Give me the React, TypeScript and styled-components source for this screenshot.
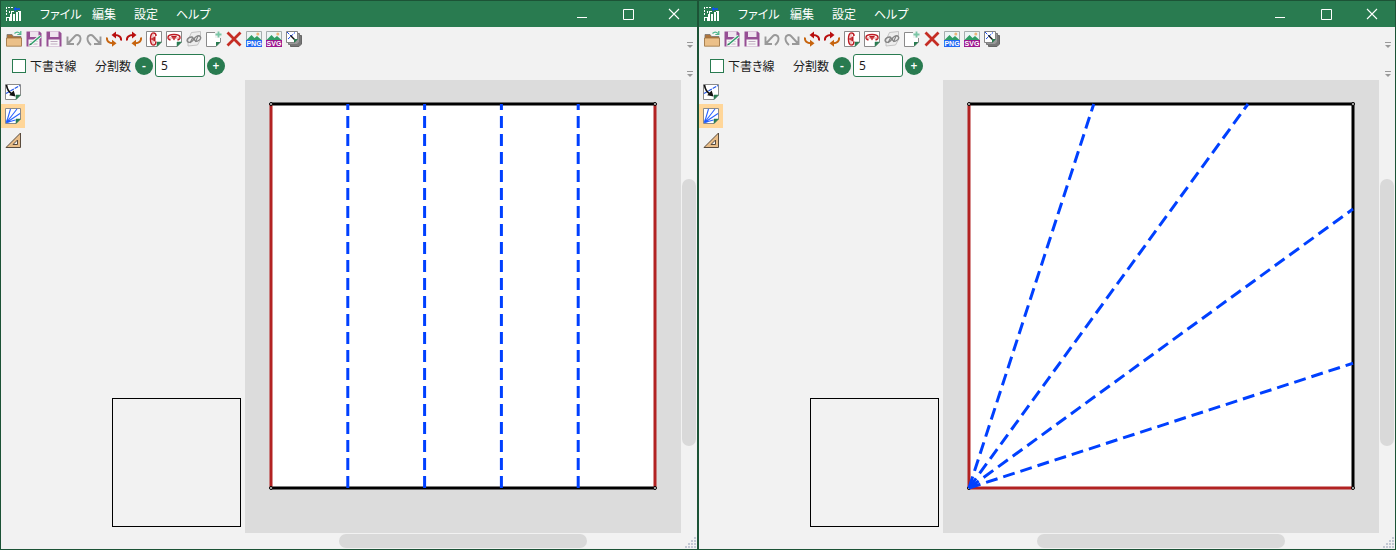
import React, { useId } from "react";
import styled, { createGlobalStyle } from "styled-components";

const Global = createGlobalStyle`
  * { box-sizing: border-box; }
  body { margin: 0; background: #f2f2f2; }
  body, button, input { font-family: "Noto Sans", "Noto Sans CJK JP", sans-serif; font-size: 12px; color: #1b1b1b; }
  button { border: 0; padding: 0; background: none; cursor: pointer; }
`;

const Desktop = styled.main`
  display: flex;
  min-height: 100vh;
`;

const Frame = styled.section`
  flex: 1;
  min-width: 0;
  display: flex;
  flex-direction: column;
  background: #f2f2f2;
  border: 1px solid #1c5336;
`;

const TitleBar = styled.header`
  display: flex;
  align-items: center;
  height: 26px;
  padding-left: 5px;
  background: #297b50;
`;

const Menu = styled.nav`
  flex: 1;
  display: grid;
  grid-template-columns: 52px 42px 42px 1fr;
  margin-left: 18px;
`;

const MenuItem = styled.button`
  color: #fff;
  text-align: left;
  line-height: 24px;
  font-family: "Noto Sans CJK JP", sans-serif;
  font-feature-settings: "palt";
`;

const CaptionButton = styled.button`
  width: 46px;
  height: 26px;
  display: grid;
  place-items: center;
`;

const Bar = styled.div<{ $height: number }>`
  display: flex;
  align-items: center;
  justify-content: space-between;
  height: ${(p) => p.$height}px;
  padding: 0 3px 0 4px;
`;

const ToolStrip = styled.div`
  display: flex;
  gap: 4px;
  padding-left: 1px;
`;

const IconButton = styled.button`
  width: 16px;
  height: 16px;
  display: block;
`;

const Overflow = styled.button`
  align-self: flex-end;
  width: 8px;
  height: 12px;
  display: block;
`;

const Options = styled.div`
  display: flex;
  align-items: center;
  padding-left: 7px;
`;

const Label = styled.label`
  line-height: 24px;
  margin-right: 4px;
  font-family: "Noto Sans CJK JP", sans-serif;
  font-feature-settings: "palt";
`;

const Check = styled.input`
  appearance: none;
  width: 14px;
  height: 14px;
  margin: 0 4px 0 0;
  background: #fff;
  border: 1px solid #297b50;
  &:checked { background: #297b50; }
`;

const CheckField = styled.div`
  display: flex;
  align-items: center;
  width: 83px;
`;

const Round = styled.button`
  width: 18px;
  height: 18px;
  border-radius: 50%;
  background: #297b50;
  color: #fff;
  font-weight: 600;
  line-height: 18px;
`;

const NumberBox = styled.input`
  width: 50px;
  height: 23px;
  margin: 0 2px;
  padding: 0 5px;
  border: 1px solid #297b50;
  border-radius: 3px;
  background: #fff;
`;

const Body = styled.div`
  flex: 1;
  display: flex;
`;

const Palette = styled.div`
  width: 24px;
`;

const PaletteButton = styled.button<{ $active: boolean }>`
  display: grid;
  place-items: center;
  width: 24px;
  height: 24px;
  background: ${(p) => (p.$active ? "#ffd699" : "transparent")};
`;

const Side = styled.aside`
  width: 220px;
  display: flex;
  align-items: flex-end;
  justify-content: flex-end;
  padding: 0 4px 22px 0;
`;

const Preview = styled.div`
  width: 129px;
  height: 129px;
  border: 1px solid #000;
`;

const Work = styled.div`
  flex: 1;
  min-width: 0;
  display: grid;
  grid-template-columns: 1fr 16px;
  grid-template-rows: 1fr 16px;
`;

const Paper = styled.div`
  background: #dcdcdc;
  padding: 20px 0 41px;
  overflow: hidden;
  display: flex;
  justify-content: center;
  align-items: flex-start;
`;

const Drawing = styled.svg`
  flex: none;
  width: 392px;
  height: 392px;
`;

const VTrack = styled.div`
  padding: 99px 1px 87px;
  display: flex;
`;

const HTrack = styled.div`
  padding: 1px 94px;
  display: flex;
`;

const Thumb = styled.div`
  flex: 1;
  border-radius: 7px;
  background: #d9d9d9;
`;

const Grip = styled.svg`
  width: 12px;
  height: 12px;
  place-self: end;
`;

const Svg = ({ children, size = 16 }: { children: React.ReactNode; size?: number }) => (
  <svg width={size} height={size} viewBox={`0 0 ${size} ${size}`} fill="none" display="block" aria-hidden="true">
    {children}
  </svg>
);

const Sheet = () => (
  <>
    <path d="M.5.5h15v10.5l-4.5 4.5H.5z" fill="#fff" stroke="#8a8a8a" />
    <path d="M11 15.5V11h4.5z" fill="#297b50" stroke="#297b50" strokeWidth=".5" />
  </>
);

const Floppy = () => (
  <>
    <path d="M.5.5h13.2l1.8 1.8v13.2H.5z" fill="#964f94" />
    <path d="M4 .5h8.5V6H4z" fill="#efe4ef" />
    <path d="M2.5 8.5h11v7h-11z" fill="#f7f7f7" />
    <path d="M4.5 10.5h7M4.5 13h7" stroke="#bfaabf" />
  </>
);

const Undo = () => (
  <path d="M1.5 5.5V13H8M2 12.5 9 5c1.8-1.8 5.2-.8 5.5 2 .2 2.5-1 5-3.5 7" stroke="#999" strokeWidth="1.9" />
);

const Rotate = () => (
  <>
    <path d="M15 9.5C15.5 6 13 4 9 4" stroke="#b90e0e" strokeWidth="2" />
    <path d="M10 .5v7L5.5 4z" fill="#b90e0e" />
    <path d="M1 6.5C.5 10 3 12.2 7 12.2" stroke="#c7640e" strokeWidth="2" />
    <path d="M6 8.8v7l4.5-3.5z" fill="#c7640e" />
  </>
);

const Picture = ({ tag, color }: { tag: string; color: string }) => (
  <>
    <path d="M.5.5h15v9H.5z" fill="#edf4f5" stroke="#a5adad" />
    <path d="M1 8.5 5.5 4l3 3L11 5l4 3.5V9H1z" fill="#2f9d65" />
    <circle cx="11.8" cy="3" r="1.5" fill="#edb57a" />
    <path d="M0 9h16v7H0z" fill={color} />
    <text x="8" y="15" textAnchor="middle" fill="#fff" fontFamily="Liberation Sans, sans-serif" fontSize="7" fontWeight="700">{tag}</text>
  </>
);

const icons: { name: string; art: React.ReactNode }[] = [
  {
    name: "開く",
    art: (
      <>
        <path d="M1 14V3.5h5l1.5 2H15V14z" fill="#ad733b" stroke="#77736e" strokeWidth=".8" />
        <path d="M.5 7h15v8.2H.5z" fill="#ebc089" stroke="#9c713e" strokeWidth=".8" />
        <path d="M8.5 2.5c2-2 4-1.5 5.5 0M14.8 0v3.5h-3.5" stroke="#4bb58a" strokeWidth="1.2" />
      </>
    ),
  },
  {
    name: "名前を付けて保存",
    art: (
      <>
        <Floppy />
        <path d="m4.5 13.5 10-8.5" stroke="#f7f7f7" strokeWidth="3.4" />
        <path d="M4.5 13.5 14.5 5" stroke="#2f9e6c" strokeWidth="1.6" />
        <path d="m3 14.5 1-2.2 1.5 1.5z" fill="#24774f" />
      </>
    ),
  },
  { name: "保存", art: <Floppy /> },
  { name: "元に戻す", art: <Undo /> },
  { name: "やり直し", art: <g transform="matrix(-1 0 0 1 16 0)"><Undo /></g> },
  { name: "左回転", art: <Rotate /> },
  { name: "右回転", art: <g transform="matrix(-1 0 0 1 16 0)"><Rotate /></g> },
  {
    name: "左右反転",
    art: (
      <>
        <Sheet />
        <path d="M7.5 2C9.5 2 10 3.500 10 5M7.500 2C5.500 2 4.500 5 4.500 8s1 6 3 6c1.300 0 2.300-1.500 2.500-3.500" stroke="#bd1a22" strokeWidth="1.500" />
        <path d="M4.500 8 9.500 5v6z" fill="#bd1a22" />
        <path d="M7 1v14" stroke="#d77" strokeWidth=".8" />
      </>
    ),
  },
  {
    name: "上下反転",
    art: (
      <>
        <Sheet />
        <path d="M4.500 9C2.500 8.500 2 7.500 2 6.500 2 4.500 5 3.500 8 3.500s6 1 6 3c0 1-.7 2-2.500 2.500" stroke="#bd1a22" strokeWidth="1.500" />
        <path d="M5 5h6L8 9.500z" fill="#bd1a22" />
        <path d="M1 7h14" stroke="#d77" strokeWidth=".8" />
      </>
    ),
  },
  {
    name: "裏返す",
    art: (
      <>
        <path d="m5.500 1.500 9-1v8l-3 5.500-9.500 1V9z" fill="#ededed" stroke="#b8b8b8" strokeWidth=".8" />
        <ellipse cx="4.300" cy="8.700" rx="3.300" ry="2.300" transform="rotate(-30 4.300 8.700)" stroke="#858585" strokeWidth="1.400" />
        <ellipse cx="11.500" cy="7.500" rx="3.300" ry="2.300" transform="rotate(-30 11.500 7.500)" stroke="#858585" strokeWidth="1.400" />
        <path d="m4 12 2.500-5M9.500 11 12 5" stroke="#858585" strokeWidth="1.200" />
      </>
    ),
  },
  {
    name: "追加",
    art: (
      <>
        <path d="M.5 1.500h14v9.500L10 15.500H.5z" fill="#fff" stroke="#8a8a8a" />
        <path d="M10 15.500V11h4.500z" fill="#297b50" />
        <path d="M9 0h7v7H9z" fill="#f2f2f2" />
        <path d="M12.500.5v6M9.500 3.500h6" stroke="#7ac5a5" strokeWidth="1.800" />
      </>
    ),
  },
  { name: "削除", art: <path d="m1.500 1.500 13 13M14.500 1.500l-13 13" stroke="#c52d24" strokeWidth="2.800" /> },
  { name: "PNG出力", art: <Picture tag="PNG" color="#2468f2" /> },
  { name: "SVG出力", art: <Picture tag="SVG" color="#9b188f" /> },
  {
    name: "複製",
    art: (
      <>
        <path d="M4.500 4.500h11v8.500L13 15.500H4.500z" fill="#777" stroke="#666" />
        <path d="M2.500 2.500h11v8.500L11 13.500H2.500z" fill="#999" stroke="#777" />
        <path d="M.5.5h11v8l-3 3h-8z" fill="#fff" stroke="#858585" />
        <path d="m1 1 7 7M2 8l7-6.500" stroke="#1b4ae8" strokeDasharray="3 1" />
        <path d="m4.500 4.500 4 4" stroke="#111" strokeWidth="1.400" />
        <path d="M8 12V8h4z" fill="#297b50" />
      </>
    ),
  },
];

const tools = [
  {
    name: "折り線",
    art: (
      <>
        <Sheet />
        <path d="M1 9.500 15 1.500" stroke="#2457e8" strokeWidth="1.200" strokeDasharray="4 1" />
        <path d="M1.500 1C2 5 4 8 7 10" stroke="#111" strokeWidth="1.700" />
        <path d="m10.500 12.500-6.300-1.200 4.500-4.800z" fill="#111" />
      </>
    ),
  },
  {
    name: "分割線",
    art: (
      <>
        <Sheet />
        <path d="M1.500 14.500 5.500 1M1.500 14.500 12 1M1.500 14.500 15 5.500M1.500 14.500l9-2.500" stroke="#2a62ff" strokeWidth="1.100" />
        <path d="m1 15 .8-3.500 3 2.500z" fill="#1f5bff" />
      </>
    ),
  },
  {
    name: "定規",
    art: (
      <>
        <path d="M15.500 1v14.500H1z" fill="#e9bd88" stroke="#594b3d" />
        <path d="M12.500 8v4.500H8z" fill="#f2f2f2" stroke="#594b3d" />
      </>
    ),
  },
];

const AppLogo = () => (
  <Svg>
    <path
      d="M0 1h1v2H0zM2 1h2v1H2zM5 1h2v1H5zM0 4h1v2H0zM0 7h1v2H0zM3 5h1v2H3zM0 11h4v4H3v-3H1v3H0zM5 5h3v1H6v2H5zM4 8h2v7H4zM7 8h2v7H7zM10 6h2v9h-2zM13 6h2v9h-2zM12 5h3v1h-3z"
      fill="#fff"
    />
    <path d="M7.500 3 10 .8v1.500h4v1.500h-4v1.500z" fill="#0a4dff" />
  </Svg>
);

type Line = [number, number, number, number];
const size = 384;
const slope = (degrees: number) => size * Math.tan((degrees * Math.PI) / 180);
const parallel: Line[] = [1, 2, 3, 4].map((i) => [(size * i) / 5, size, (size * i) / 5, 0]);
const radial: Line[] = [
  [0, size, slope(18), 0],
  [0, size, slope(36), 0],
  [0, size, size, size - slope(36)],
  [0, size, size, size - slope(18)],
];

const OverflowMark = () => (
  <Overflow aria-label="その他のボタン">
    <svg width="8" height="8" viewBox="0 0 8 8" display="block">
      <path d="M1 1.500h6" stroke="#999" />
      <path d="M1 4h6L4 7z" fill="#999" />
    </svg>
  </Overflow>
);

const EditorWindow = ({ lines, edges }: { lines: Line[]; edges: { black: string; red: string } }) => {
  const id = useId();
  return (
    <Frame>
      <TitleBar>
        <AppLogo />
        <Menu>
          {["ファイル", "編集", "設定", "ヘルプ"].map((m) => <MenuItem key={m}>{m}</MenuItem>)}
        </Menu>
        <CaptionButton aria-label="最小化"><Svg size={12}><path d="M1 9.500h10" stroke="#fff" /></Svg></CaptionButton>
        <CaptionButton aria-label="最大化"><Svg size={12}><path d="M1.500 1.500h10v10h-10z" stroke="#fff" /></Svg></CaptionButton>
        <CaptionButton aria-label="閉じる"><Svg size={12}><path d="m1 1 10 10M11 1 1 11" stroke="#fff" strokeWidth="1.100" /></Svg></CaptionButton>
      </TitleBar>
      <Bar $height={24}>
        <ToolStrip>
          {icons.map((i) => <IconButton key={i.name} aria-label={i.name}><Svg>{i.art}</Svg></IconButton>)}
        </ToolStrip>
        <OverflowMark />
      </Bar>
      <Bar $height={29}>
        <Options>
          <CheckField>
            <Check type="checkbox" id={`${id}-draft`} />
            <Label htmlFor={`${id}-draft`}>下書き線</Label>
          </CheckField>
          <Label htmlFor={`${id}-count`}>分割数</Label>
          <Round aria-label="減らす">-</Round>
          <NumberBox id={`${id}-count`} defaultValue="5" />
          <Round aria-label="増やす">+</Round>
        </Options>
        <OverflowMark />
      </Bar>
      <Body>
        <Palette>
          {tools.map((t, i) => (
            <PaletteButton key={t.name} $active={i === 1} aria-label={t.name}><Svg>{t.art}</Svg></PaletteButton>
          ))}
        </Palette>
        <Side><Preview /></Side>
        <Work>
          <Paper>
            <Drawing viewBox="-4 -4 392 392">
              <path d="M0 0h384v384H0z" fill="#fff" />
              <path d={edges.black} stroke="#000" strokeWidth="3" fill="none" />
              <path d={edges.red} stroke="#b22222" strokeWidth="3" fill="none" />
              {[[0, 0], [384, 0], [0, 384], [384, 384]].map(([x, y]) => (
                <circle key={`${x}-${y}`} cx={x} cy={y} r="1.500" fill="#ddd" stroke="#000" />
              ))}
              {lines.map(([x1, y1, x2, y2]) => (
                <line key={`${x2}-${y2}`} x1={x1} y1={y1} x2={x2} y2={y2} stroke="#0040ff" strokeWidth="3" strokeDasharray="12 6" />
              ))}
            </Drawing>
          </Paper>
          <VTrack><Thumb /></VTrack>
          <HTrack><Thumb /></HTrack>
          <Grip viewBox="0 0 12 12">
            {[[10, 1], [7, 4], [10, 4], [4, 7], [7, 7], [10, 7], [1, 10], [4, 10], [7, 10], [10, 10]].map(([x, y]) => (
              <rect key={`${x}-${y}`} x={x - 1} y={y - 1} width="2" height="2" fill="#c3c8d4" />
            ))}
          </Grip>
        </Work>
      </Body>
    </Frame>
  );
};

export default function App() {
  return (
    <>
      <Global />
      <Desktop>
        <EditorWindow lines={parallel} edges={{ black: "M0 0H384M0 384H384", red: "M0 0V384M384 0V384" }} />
        <EditorWindow lines={radial} edges={{ black: "M0 0H384V384", red: "M0 0V384H384" }} />
      </Desktop>
    </>
  );
}
